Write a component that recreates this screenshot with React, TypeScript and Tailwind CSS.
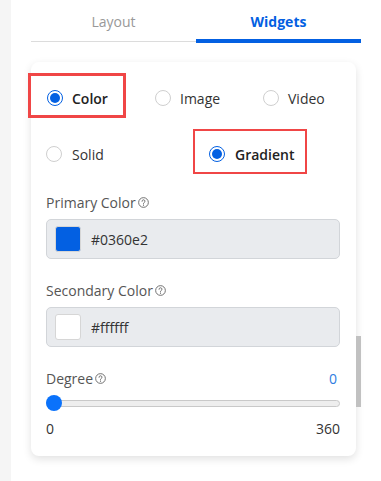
import React from 'react';

function Radio({ checked }: { checked?: boolean }) {
  return checked ? (
    <span className="w-4 h-4 rounded-full border border-[#0360e2] flex items-center justify-center bg-white">
      <span className="w-[10px] h-[10px] rounded-full bg-[#0360e2]"></span>
    </span>
  ) : (
    <span className="w-4 h-4 rounded-full border border-[#cfcfcf] bg-white"></span>
  );
}

function Help() {
  return (
    <svg width="11" height="11" viewBox="0 0 12 12" className="ml-[2px]">
      <circle cx="6" cy="6" r="5.3" fill="none" stroke="#666" strokeWidth="1" />
      <path d="M4.4 4.7a1.6 1.6 0 1 1 2.3 1.4c-.5.3-.7.5-.7 1v.3" fill="none" stroke="#666" strokeWidth="1" strokeLinecap="round" />
      <circle cx="6" cy="8.9" r="0.6" fill="#666" />
    </svg>
  );
}

function ColorField({ label, swatch, value }: { label: string; swatch: string; value: string }) {
  return (
    <div>
      <div className="h-5 flex items-center text-[14px] text-[#555]">
        {label}
        <Help />
      </div>
      <div className="mt-[7px] h-10 w-[294px] rounded-[5px] border border-[#d2d5d9] bg-[#e9ebee] flex items-center pl-[8px]">
        <span className={`w-[26px] h-[26px] rounded-[3px] border border-[#d6d6d6] ${swatch}`}></span>
        <span className="ml-[10px] text-[14px] text-[#333]">{value}</span>
      </div>
    </div>
  );
}

export default function App() {
  return (
    <div className="w-[381px] h-[481px] flex bg-white overflow-hidden" style={{ fontFamily: '"Open Sans", sans-serif' }}>
      <div className="w-[11px] bg-[#f5f5f5]"></div>
      <div className="relative w-[370px] pl-[20px] pr-[20px]">
        {/* Tabs */}
        <div className="flex">
          <div className="flex-1 flex flex-col">
            <div className="h-[39px] flex items-center justify-center pt-[3px] text-[14px] text-[#999]">Layout</div>
            <div className="h-[4px] pt-[2px]">
              <div className="h-px bg-[#dcdcdc]"></div>
            </div>
          </div>
          <div className="flex-1 flex flex-col">
            <div className="h-[39px] flex items-center justify-center pt-[3px] text-[14px] font-bold text-[#0360e2]">Widgets</div>
            <div className="h-[4px] bg-[#0360e2]"></div>
          </div>
        </div>

        {/* Card */}
        <div className="mt-[19px] mr-[5px] rounded-[8px] bg-white shadow-[0_3px_8px_rgba(0,0,0,0.12)] pl-[15px] pr-[16px] pt-[24px] pb-[18px]">
          <div className="flex h-6 items-center text-[14px] text-[#333]">
            <div className="w-[108px] flex items-center pl-px">
              <Radio checked />
              <span className="ml-[9px] font-semibold text-[#222]">Color</span>
            </div>
            <div className="w-[108px] flex items-center pl-px">
              <Radio />
              <span className="ml-[9px]">Image</span>
            </div>
            <div className="flex items-center pl-px">
              <Radio />
              <span className="ml-[9px]">Video</span>
            </div>
          </div>

          <div className="mt-8 flex h-6 items-center text-[14px] text-[#333]">
            <div className="w-[163px] flex items-center">
              <Radio />
              <span className="ml-[10px]">Solid</span>
            </div>
            <div className="flex items-center">
              <Radio checked />
              <span className="ml-[10px] font-semibold text-[#222]">Gradient</span>
            </div>
          </div>

          <div className="mt-[26px]">
            <ColorField label="Primary Color" swatch="bg-[#0360e2]" value="#0360e2" />
          </div>
          <div className="mt-[21px]">
            <ColorField label="Secondary Color" swatch="bg-white" value="#ffffff" />
          </div>

          <div className="mt-[21px]">
            <div className="h-5 flex items-center justify-between text-[14px]">
              <span className="flex items-center text-[#555]">
                Degree
                <Help />
              </span>
              <span className="text-[#2f7de1] pr-[3px]">0</span>
            </div>
            <div className="mt-[7px] relative h-4 w-[294px] flex items-center">
              <div className="h-[7px] w-full rounded-full bg-[#eeeeee] border border-[#c9c9c9]"></div>
              <div className="absolute left-0 top-0 w-4 h-4 rounded-full bg-[#0a72fb]"></div>
            </div>
            <div className="mt-[7px] h-5 w-[294px] flex items-center justify-between text-[14px] text-[#333]">
              <span>0</span>
              <span>360</span>
            </div>
          </div>
        </div>

        {/* scrollbar thumb */}
        <div className="absolute left-[345px] top-[336px] w-[5px] h-[71px] bg-[#c1c1c1]"></div>

        {/* annotation boxes */}
        <div className="absolute left-[17px] top-[73px] w-[98px] h-[45px] border-[3px] border-[#f04646]"></div>
        <div className="absolute left-[182px] top-[129px] w-[114px] h-[45px] border-2 border-[#f04646]"></div>
      </div>
    </div>
  );
}
